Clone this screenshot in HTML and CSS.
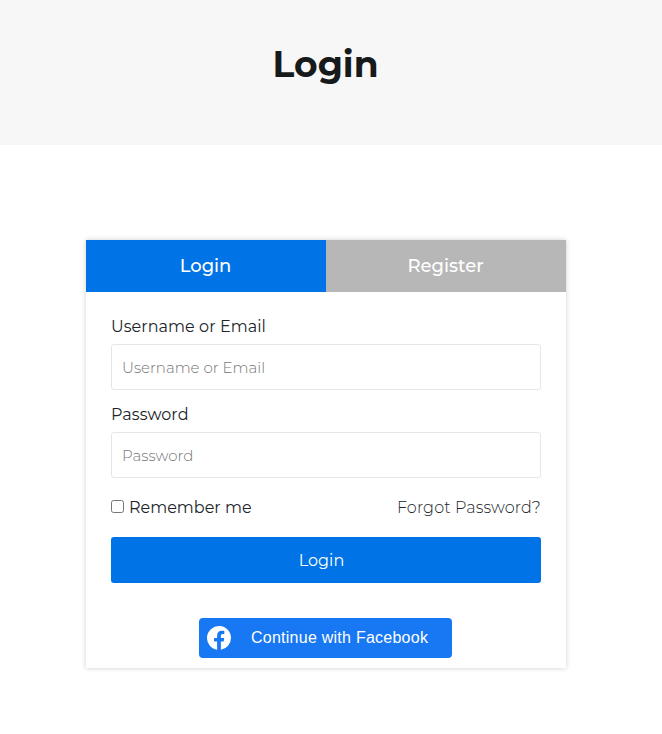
FILE: index.html
```
<!DOCTYPE html>
<html lang="en">
<head>
    <meta charset="UTF-8">
    <meta name="viewport" content="width=device-width, initial-scale=1.0">
    <title>Login</title>
    <link rel="stylesheet" href="styles.css">
</head>
<body>
    <header class="page-title">
        <h1>Login</h1>
    </header>

    <main class="content">
        <div class="login-card">
            <div class="tab-buttons">
                <button type="button" class="tab-button active">Login</button>
                <button type="button" class="tab-button">Register</button>
            </div>

            <form class="login-form">
                <label class="field-label" for="username">Username or Email</label>
                <input class="field" type="text" id="username" placeholder="Username or Email">

                <label class="field-label" for="password">Password</label>
                <input class="field" type="password" id="password" placeholder="Password">

                <div class="form-row">
                    <label class="remember"><input type="checkbox"><span>Remember me</span></label>
                    <a class="forgot" href="#">Forgot Password?</a>
                </div>

                <button type="submit" class="submit-button">Login</button>
            </form>

            <!-- Social login -->
            <a class="facebook-button" href="#">
                <svg class="facebook-icon" viewBox="0 0 1365.3 1365.3" width="24" height="24">
                    <path fill="#fff" d="M1365.3 682.7A682.7 682.7 0 10576 1357V880H402.7V682.7H576V532.3c0-171 102-265.6 257.9-265.6 74.6 0 152.8 13.3 152.8 13.3v168h-86.1c-84.8 0-111.3 52.6-111.3 106.7v128h189.4L948.4 880H789.3v477a682.8 682.8 0 00576-674.3"/>
                </svg>
                <span>Continue with Facebook</span>
            </a>
        </div>
    </main>
</body>
</html>
```
FILE: styles.css
```
* {
    box-sizing: border-box;
}
body {
    margin: 0;
    background-color: #fff;
    color: #212529;
    font-family: Montserrat, Inter, sans-serif;
    font-size: 16px;
    line-height: 24px;
}
.page-title {
    height: 145px;
    padding: 42px 11px 0 0;
    background-color: #f7f7f7;
    text-align: center;
}
.page-title h1 {
    margin: 0;
    color: #161a1a;
    font-size: 36px;
    font-weight: 700;
    line-height: 44px;
}
.content {
    padding: 95px 10px 66px 0;
}
.login-card {
    display: flex;
    flex-direction: column;
    width: 480px;
    height: 428px;
    margin: 0 auto;
    background-color: #fff;
    box-shadow: 0 0 5px rgba(0, 0, 0, 0.2);
}
.tab-buttons {
    display: flex;
}
.tab-button {
    flex: 1;
    height: 52px;
    padding: 0 1px 0 0;
    border: none;
    background-color: #b7b7b7;
    color: #fff;
    font-family: inherit;
    font-size: 18px;
    font-weight: 500;
    cursor: pointer;
}
.tab-button.active {
    background-color: #0073e6;
}
.login-form {
    display: flex;
    flex-direction: column;
    padding: 23px 25px 0;
}
.field-label {
    margin-bottom: 5px;
    letter-spacing: 0.06px;
}
.field {
    width: 100%;
    height: 46px;
    margin: 0 0 13px;
    padding: 0 10px;
    border: 1px solid #e6e6e6;
    border-radius: 3px;
    background-color: #fff;
    font-family: inherit;
    font-size: 15px;
    font-weight: 300;
}
.field::placeholder {
    color: #757575;
}
.form-row {
    display: flex;
    align-items: center;
    justify-content: space-between;
    margin: 5px 0 17px;
}
.remember {
    display: flex;
    align-items: center;
    gap: 5px;
}
.remember input {
    width: 13px;
    height: 13px;
    margin: 0 0 3px;
}
.forgot {
    color: #212529;
    font-weight: 300;
    letter-spacing: 0.12px;
    text-decoration: none;
}
.submit-button {
    height: 46px;
    padding: 0 9px 0 0;
    border: none;
    border-radius: 3px;
    background-color: #0073e6;
    color: #fff;
    font-family: inherit;
    font-size: 16px;
    cursor: pointer;
}
.facebook-button {
    display: flex;
    align-items: center;
    align-self: center;
    gap: 20px;
    width: 253px;
    height: 40px;
    margin: 35px 1px 0 0;
    padding-left: 8px;
    border-radius: 4px;
    background-color: #1877f2;
    color: #fff;
    font-family: "Liberation Sans", Arial, sans-serif;
    font-size: 16px;
    letter-spacing: 0.25px;
    text-decoration: none;
    white-space: nowrap;
}
```
